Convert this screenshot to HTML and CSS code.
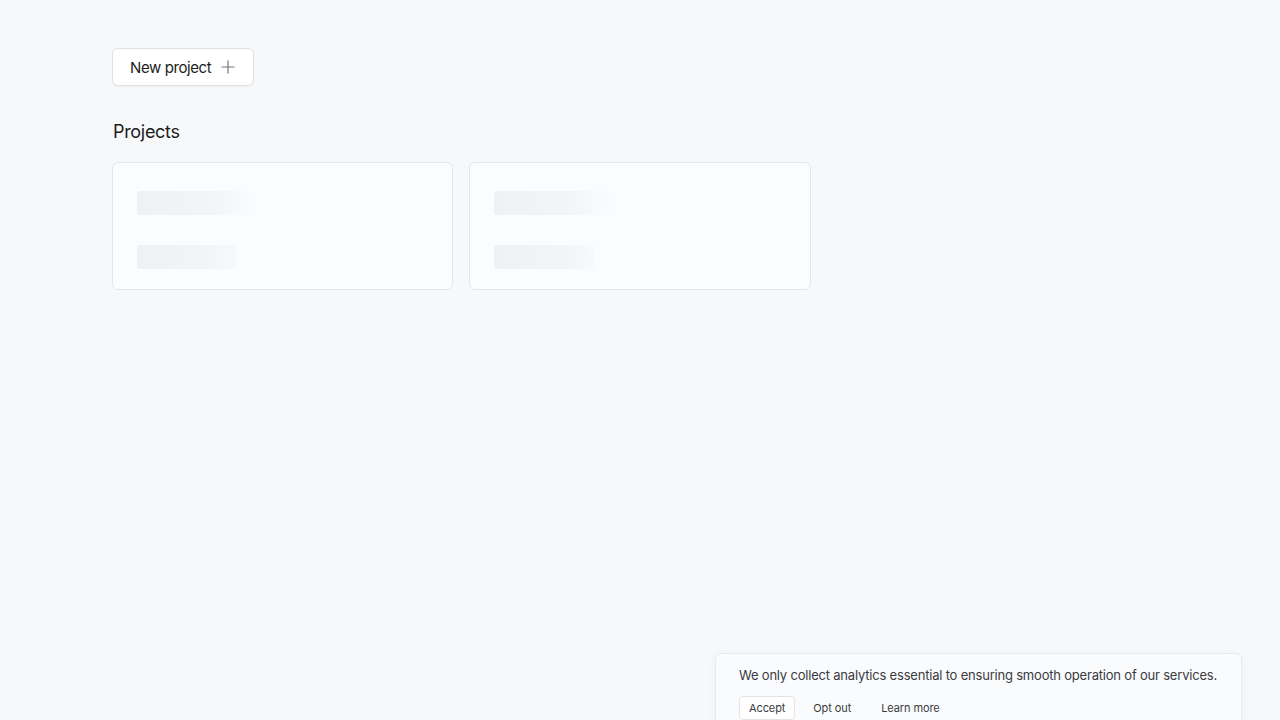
FILE: index.html
```html
<!DOCTYPE html>
<html>
<head>
<meta charset="utf-8">
<link rel="stylesheet" href="styles.css">
</head>
<body>
<main class="page">
  <div class="toolbar">
    <button class="btn-new">New project
      <svg class="plus" width="14" height="14" viewBox="0 0 14 14"><path d="M7 0.5v13M0.5 7h13" stroke="#74777d" stroke-width="1.2" fill="none"/></svg>
    </button>
  </div>
  <h2 class="section-title">Projects</h2>
  <div class="grid">
    <div class="card"><div class="skel skel-a"></div><div class="skel skel-b"></div></div>
    <div class="card"><div class="skel skel-a"></div><div class="skel skel-b"></div></div>
  </div>
</main>
<div class="cookie">
  <p class="cookie-text">We only collect analytics essential to ensuring smooth operation of our services.</p>
  <div class="cookie-actions">
    <button class="cbtn cbtn-primary">Accept</button>
    <button class="cbtn">Opt out</button>
    <button class="cbtn">Learn more</button>
  </div>
</div>
</body>
</html>
```
FILE: styles.css
```css
html, body { margin: 0; padding: 0; }
body {
  background: #f7f8fa;
  font-family: Inter, "Noto Sans", sans-serif;
  color: #1c1d21;
  width: 1280px;
  height: 720px;
  overflow: hidden;
  position: relative;
}
.page { padding: 48px 112px 0; }
.toolbar { display: flex; }
.btn-new {
  display: flex; align-items: center; gap: 10px;
  height: 38px; box-sizing: border-box;
  padding: 0 18px 0 17px;
  background: #ffffff;
  border: 1px solid #dfe1e5;
  border-radius: 6px;
  font-family: inherit; font-size: 15px; color: #1c1d21;
  letter-spacing: -0.4px;
  box-shadow: 0 1px 2px rgba(0,0,0,0.04);
}
.section-title {
  margin: 34px 0 18px 1px;
  font-size: 18px; font-weight: 400; line-height: 24px;
  letter-spacing: -0.3px;
}
.grid { display: grid; grid-template-columns: repeat(3, 1fr); gap: 16px; }
.card {
  height: 128px; box-sizing: border-box;
  background: #fbfcfd;
  border: 1px solid #e4e6ea;
  border-radius: 6px;
  padding: 28px 24px 0;
  display: flex; flex-direction: column; gap: 30px;
}
.skel {
  flex-shrink: 0;
  height: 24px; border-radius: 3px;
  background: linear-gradient(90deg, #f0f1f3 0%, #f3f4f6 60%, #fbfcfd 100%);
}
.skel-a { width: 120px; }
.skel-b { width: 100px; background: linear-gradient(90deg, #f0f1f3 0%, #f3f4f6 70%, #f8f9fa 100%); }
.cookie {
  position: absolute; left: 715px; top: 653px;
  width: 527px; height: 90px; box-sizing: border-box;
  background: #fafbfc;
  border: 1px solid #e8eaed;
  border-radius: 6px;
  padding: 11px 23px;
  box-shadow: 0 2px 8px rgba(0,0,0,0.04);
}
.cookie-text {
  margin: 0; font-size: 13px; line-height: 20px; color: #3a3c41;
  letter-spacing: -0.2px; white-space: nowrap;
}
.cookie-actions { display: flex; gap: 6px; margin-top: 11px; }
.cbtn {
  height: 24px; box-sizing: border-box;
  padding: 0 9px;
  background: transparent; border: 1px solid transparent; border-radius: 4px;
  font-family: inherit; font-size: 11px; color: #3a3c41; letter-spacing: -0.1px;
}
.cbtn + .cbtn { padding: 0 11px; }
.cbtn-primary { background: #ffffff; border-color: #e2e4e8; }
```
